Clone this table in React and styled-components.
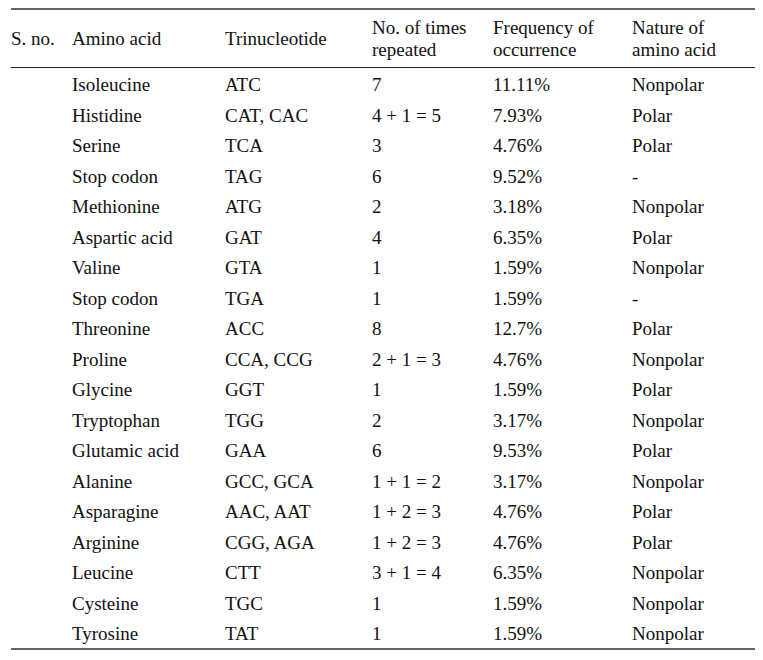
import React from "react";
import styled, { createGlobalStyle } from "styled-components";

const rows = [
  ["Isoleucine", "ATC", "7", "11.11%", "Nonpolar"],
  ["Histidine", "CAT, CAC", "4 + 1 = 5", "7.93%", "Polar"],
  ["Serine", "TCA", "3", "4.76%", "Polar"],
  ["Stop codon", "TAG", "6", "9.52%", "-"],
  ["Methionine", "ATG", "2", "3.18%", "Nonpolar"],
  ["Aspartic acid", "GAT", "4", "6.35%", "Polar"],
  ["Valine", "GTA", "1", "1.59%", "Nonpolar"],
  ["Stop codon", "TGA", "1", "1.59%", "-"],
  ["Threonine", "ACC", "8", "12.7%", "Polar"],
  ["Proline", "CCA, CCG", "2 + 1 = 3", "4.76%", "Nonpolar"],
  ["Glycine", "GGT", "1", "1.59%", "Polar"],
  ["Tryptophan", "TGG", "2", "3.17%", "Nonpolar"],
  ["Glutamic acid", "GAA", "6", "9.53%", "Polar"],
  ["Alanine", "GCC, GCA", "1 + 1 = 2", "3.17%", "Nonpolar"],
  ["Asparagine", "AAC, AAT", "1 + 2 = 3", "4.76%", "Polar"],
  ["Arginine", "CGG, AGA", "1 + 2 = 3", "4.76%", "Polar"],
  ["Leucine", "CTT", "3 + 1 = 4", "6.35%", "Nonpolar"],
  ["Cysteine", "TGC", "1", "1.59%", "Nonpolar"],
  ["Tyrosine", "TAT", "1", "1.59%", "Nonpolar"],
];

const GlobalStyle = createGlobalStyle`
  body {
    margin: 0;
    background: #fff;
    font-family: "Liberation Serif", "Times New Roman", serif;
    color: #111;
  }
`;

const Wrapper = styled.div`
  padding: 8px 8px 0 11px;
  width: 744px;
`;

const Table = styled.div`
  border-top: 2px solid #666;
  border-bottom: 2px solid #666;
`;

const Row = styled.div`
  display: grid;
  grid-template-columns: 61px 153px 147px 121px 139px 1fr;
  align-items: center;
  height: ${(p) => p.h}px;
  padding-top: ${(p) => p.pt || 0}px;
  box-sizing: border-box;
  font-size: 19px;
`;

const HeadRow = styled(Row)`
  border-bottom: 1px solid #222;
  line-height: 22px;
`;

const Cell = styled.div`
  white-space: nowrap;
`;

export default function App() {
  return (
    <Wrapper>
      <GlobalStyle />
      <Table>
        <HeadRow h={58} pt={1}>
          <Cell>S. no.</Cell>
          <Cell>Amino acid</Cell>
          <Cell>Trinucleotide</Cell>
          <Cell>No. of times<br />repeated</Cell>
          <Cell>Frequency of<br />occurrence</Cell>
          <Cell>Nature of<br />amino acid</Cell>
        </HeadRow>
        {rows.map((r, i) => (
          <Row key={i} h={30.5} pt={4}>
            <Cell />
            {r.map((c, j) => (
              <Cell key={j}>{c}</Cell>
            ))}
          </Row>
        ))}
      </Table>
    </Wrapper>
  );
}
